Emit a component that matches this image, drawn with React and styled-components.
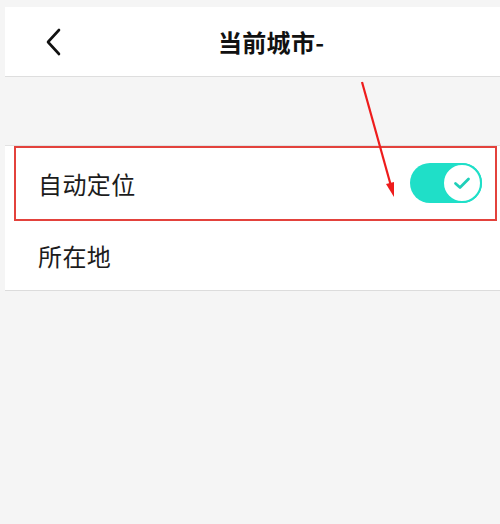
import React from "react";
import styled, { createGlobalStyle } from "styled-components";

const Global = createGlobalStyle`
  html, body { margin: 0; padding: 0; background: #f5f5f5; }
  body { font-family: "Noto Sans CJK SC", "Noto Sans", sans-serif; }
`;

const Page = styled.div`
  position: relative;
  width: 500px;
  height: 524px;
  padding: 7px 0 0 5px;
  box-sizing: border-box;
  background: #f5f5f5;
  overflow: hidden;
`;

const Header = styled.header`
  height: 69px;
  background: #fff;
  border-bottom: 1px solid #dedede;
  display: flex;
  align-items: center;
  padding-left: 40px;
`;

const Back = styled.svg`
  width: 17px;
  height: 28px;
  flex: none;
`;

const Title = styled.h1`
  margin: 0 0 0 156px;
  font-size: 24px;
  font-weight: 700;
  color: #111;
  letter-spacing: 0.3px;
`;

const Gap = styled.div`
  height: 68px;
`;

const List = styled.div`
  background: #fff;
  border-top: 1px solid #e2e2e2;
  border-bottom: 1px solid #dcdcdc;
`;

const Row = styled.div`
  position: relative;
  height: ${(p) => p.$h}px;
  display: flex;
  align-items: center;
  justify-content: space-between;
  padding: 0 18px 0 33px;
`;

const Label = styled.span`
  font-size: 24px;
  color: #1c1c1c;
  letter-spacing: 0.4px;
`;

const Track = styled.div`
  width: 72px;
  height: 40px;
  border-radius: 20px;
  background: #1fdfc8;
  display: flex;
  justify-content: flex-end;
  box-sizing: border-box;
`;

const Knob = styled.div`
  width: 40px;
  height: 40px;
  border-radius: 50%;
  background: #fff;
  border: 2px solid #1fdfc8;
  box-sizing: border-box;
  display: flex;
  align-items: center;
  justify-content: center;
`;

const Highlight = styled.div`
  position: absolute;
  left: 9px;
  right: 3px;
  top: 0;
  bottom: -1px;
  border: 2px solid #e3423c;
  pointer-events: none;
`;

const Arrow = styled.svg`
  position: absolute;
  left: 0;
  top: 0;
  width: 500px;
  height: 524px;
  pointer-events: none;
`;

export default function App() {
  return (
    <>
      <Global />
      <Page>
        <Header>
          <Back viewBox="0 0 17 28">
            <path d="M14 2 L3 14 L14 26" fill="none" stroke="#111" strokeWidth="2.6" strokeLinecap="round" strokeLinejoin="round" />
          </Back>
          <Title>当前城市-</Title>
        </Header>
        <Gap />
        <List>
          <Row $h={74}>
            <Label>自动定位</Label>
            <Track>
              <Knob>
                <svg width="20" height="16" viewBox="0 0 20 16">
                  <path d="M3.5 8.5 L8 12.5 L16.5 4" fill="none" stroke="#1fcfb9" strokeWidth="2.8" strokeLinecap="round" strokeLinejoin="round" />
                </svg>
              </Knob>
            </Track>
            <Highlight />
          </Row>
          <Row $h={70}>
            <Label>所在地</Label>
          </Row>
        </List>
        <Arrow viewBox="0 0 500 524">
          <line x1="362" y1="82" x2="391" y2="186" stroke="#ee1c1c" strokeWidth="2.2" />
          <polygon points="394,197 386,184 394,182" fill="#ee1c1c" />
        </Arrow>
      </Page>
    </>
  );
}
